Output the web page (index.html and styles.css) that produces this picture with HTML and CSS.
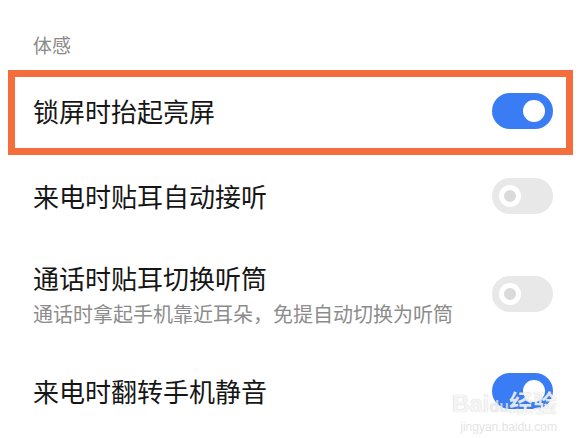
FILE: index.html
```html
<!DOCTYPE html>
<html lang="zh-CN">
<head>
    <meta charset="UTF-8">
    <title>体感</title>
    <link rel="stylesheet" href="styles.css">
</head>
<body>
<div id="page">
    <div class="group-title">体感</div>

    <div class="row highlight">
        <div class="row-text">
            <div class="title">锁屏时抬起亮屏</div>
        </div>
        <span class="switch on"><i></i></span>
    </div>

    <div class="row">
        <div class="row-text">
            <div class="title">来电时贴耳自动接听</div>
        </div>
        <span class="switch"><i></i></span>
    </div>

    <div class="row tall">
        <div class="row-text">
            <div class="title">通话时贴耳切换听筒</div>
            <div class="sub">通话时拿起手机靠近耳朵，免提自动切换为听筒</div>
        </div>
        <span class="switch"><i></i></span>
    </div>

    <div class="row">
        <div class="row-text">
            <div class="title">来电时翻转手机静音</div>
        </div>
        <span class="switch on"><i></i></span>
    </div>

    <div id="mark">
        <div class="mark-top">Bai<span class="paw">du</span>经验</div>
        <div class="mark-url">jingyan.baidu.com</div>
    </div>
</div>
</body>
</html>
```

FILE: styles.css
```css
*{
    margin: 0;
    padding: 0;
    box-sizing: border-box;
}
body{
    background: #fff;
    font-family: "Noto Sans CJK SC", "Noto Sans", sans-serif;
    color: #1a1a1a;
}
#page{
    width: 579px;
    height: 438px;
    padding-top: 32px;
    position: relative;
    overflow: hidden;
}
.group-title{
    padding-left: 33px;
    font-size: 19px;
    line-height: 26px;
    color: #8a8a8a;
}
.row{
    display: flex;
    align-items: center;
    justify-content: space-between;
    height: 82px;
    padding: 0 26px 0 33px;
}
.row.highlight{
    height: 85px;
    margin: 12px 6px 0 8px;
    border: 7px solid #f36d3d;
    padding: 0 13px 4px 18px;
}
.row.tall{
    height: auto;
    padding-top: 24px;
    padding-bottom: 23px;
}
.title{
    font-size: 26px;
    line-height: 34px;
    color: #161616;
}
.sub{
    margin-top: 6px;
    font-size: 20px;
    line-height: 26px;
    color: #8c8c8c;
}
.switch{
    width: 61px;
    height: 36px;
    border-radius: 18px;
    background: #e8e8e8;
    display: flex;
    align-items: center;
    padding-left: 7px;
    flex-shrink: 0;
}
.switch i{
    width: 22px;
    height: 22px;
    border-radius: 50%;
    border: 5px solid #fff;
    background: #dadada;
}
.switch.on{
    background: #3a7cf4;
    justify-content: flex-end;
    padding: 0 8px 0 0;
}
.switch.on i{
    border: 0;
    background: #fff;
}
/* watermark */
#mark{
    position: absolute;
    right: 22px;
    bottom: 4px;
    text-align: right;
    color: rgba(255,255,255,0.85);
    text-shadow: 0 0 1px rgba(0,0,0,0.25);
}
.mark-top{
    font-family: "Liberation Sans", "Noto Sans CJK SC", sans-serif;
    font-size: 24px;
    line-height: 26px;
    font-weight: bold;
}
.mark-top .paw{
    font-size: 16px;
    color: rgba(255,255,255,0.7);
}
.mark-url{
    font-family: "Liberation Sans", sans-serif;
    font-size: 12px;
    line-height: 14px;
    color: rgba(225,225,225,0.9);
    text-shadow: none;
}
```
